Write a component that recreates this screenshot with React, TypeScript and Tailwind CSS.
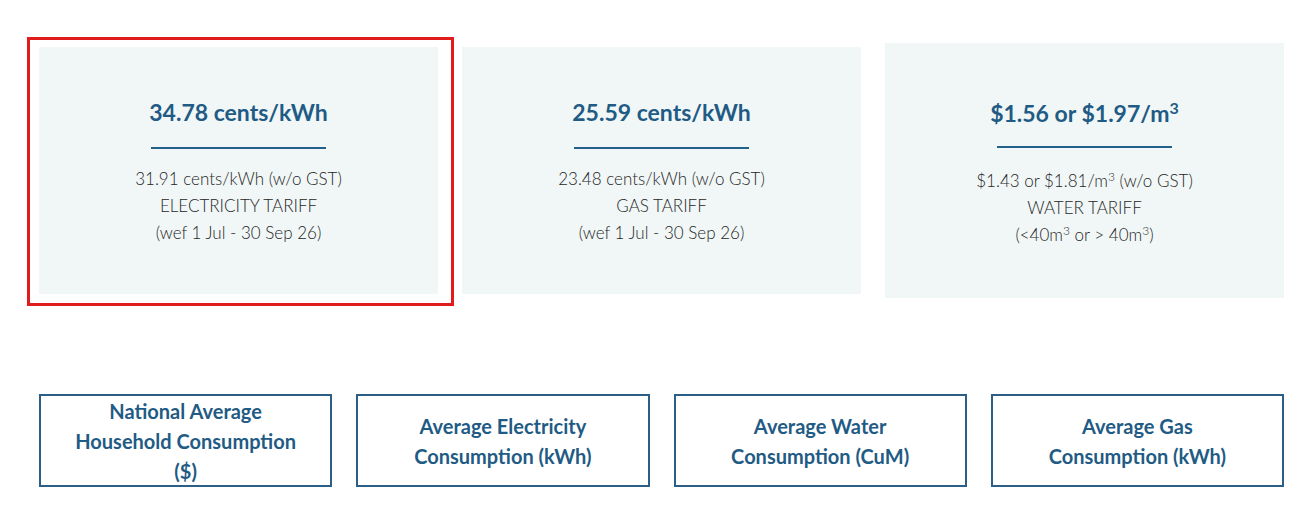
import React from "react";

const font = { fontFamily: "Lato, 'Noto Sans', sans-serif" };

function Card({
  title,
  lines,
  tall,
}: {
  title: React.ReactNode;
  lines: React.ReactNode[];
  tall?: boolean;
}) {
  return (
    <div
      className={
        tall
          ? "bg-[#f1f7f7] flex flex-col items-center pt-[54px] pb-[50px]"
          : "bg-[#f1f7f7] flex flex-col items-center pt-[49px] pb-[48px]"
      }
    >
      <div className="text-[23px] leading-[32px] font-bold text-[#1f5b84]">{title}</div>
      <div className={tall ? "w-[175px] h-[2px] bg-[#23608a] mt-[17px]" : "w-[175px] h-[2px] bg-[#23608a] mt-[19px]"} />
      <div
        className={
          tall
            ? "mt-[19px] text-[17px] leading-[27px] font-light text-[#262626] text-center"
            : "mt-[16px] text-[17px] leading-[27px] font-light text-[#262626] text-center"
        }
      >
        {lines.map((l, i) => (
          <div key={i}>{l}</div>
        ))}
      </div>
    </div>
  );
}

function Btn({ children }: { children: React.ReactNode }) {
  return (
    <div className="h-[93px] border-2 border-[#2b5f87] flex items-center justify-center text-center text-[20px] leading-[30px] font-bold text-[#1f5b84] px-2">
      <div>{children}</div>
    </div>
  );
}

export default function App() {
  return (
    <div className="w-[1304px] h-[523px] bg-white pl-[39px] pr-[20px] pt-[43px]" style={font}>
      <div className="relative grid grid-cols-3 gap-6 items-center">
        <div className="absolute left-[-12px] top-[-6px] w-[427px] h-[269px] border-[3px] border-[#e21b1b] pointer-events-none" />
        <Card
          title="34.78 cents/kWh"
          lines={["31.91 cents/kWh (w/o GST)", "ELECTRICITY TARIFF", "(wef 1 Jul - 30 Sep 26)"]}
        />
        <Card
          title="25.59 cents/kWh"
          lines={["23.48 cents/kWh (w/o GST)", "GAS TARIFF", "(wef 1 Jul - 30 Sep 26)"]}
        />
        <Card
          tall
          title={
            <>
              $1.56 or $1.97/m<sup className="text-[16px] leading-none">3</sup>
            </>
          }
          lines={[
            <>
              $1.43 or $1.81/m<sup className="text-[12px] leading-none">3</sup> (w/o GST)
            </>,
            "WATER TARIFF",
            <>
              (&lt;40m<sup className="text-[12px] leading-none">3</sup> or &gt; 40m
              <sup className="text-[12px] leading-none">3</sup>)
            </>,
          ]}
        />
      </div>
      <div className="grid grid-cols-4 gap-6 mt-[96px]">
        <Btn>
          National Average
          <br />
          Household Consumption
          <br />
          ($)
        </Btn>
        <Btn>
          Average Electricity
          <br />
          Consumption (kWh)
        </Btn>
        <Btn>
          Average Water
          <br />
          Consumption (CuM)
        </Btn>
        <Btn>
          Average Gas
          <br />
          Consumption (kWh)
        </Btn>
      </div>
    </div>
  );
}
